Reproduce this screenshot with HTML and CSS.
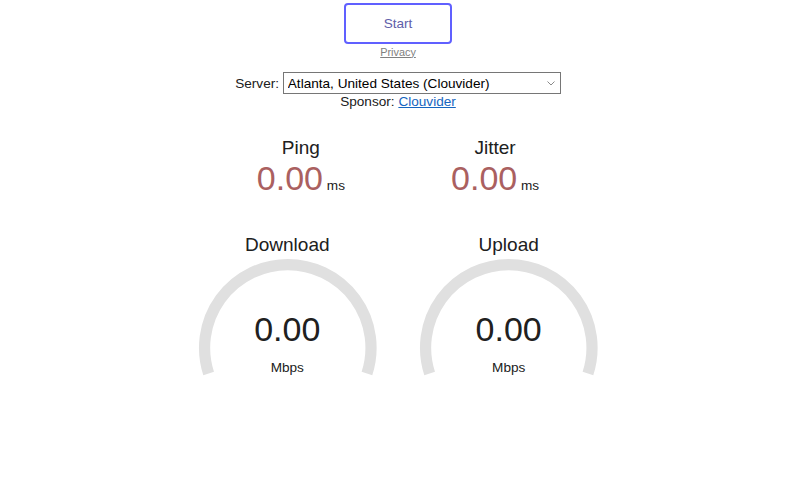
FILE: index.html
```html
<!DOCTYPE html>
<html lang="en">
<head>
<meta charset="utf-8">
<title>LibreSpeed</title>
<link rel="stylesheet" href="styles.css">
</head>
<body>
<div class="wrapper">
  <button class="start-btn" type="button">Start</button><br>
  <a class="privacy" href="#">Privacy</a>
  <div class="server-area">
    Server: <span class="select-wrap"><select class="server-select">
      <option>Atlanta, United States (Clouvider)</option>
    </select><svg class="select-arrow" viewBox="0 0 8 5" width="8" height="5"><path d="M0.5 0.5 L4 4 L7.5 0.5" fill="none" stroke="#8a8a8a" stroke-width="1"/></svg></span>
  </div>
  <div class="sponsor-area">Sponsor: <a class="sponsor-link" href="#">Clouvider</a></div>
  <div class="test">
    <div class="test-group">
      <div class="test-area-small">
        <div class="test-name">Ping</div>
        <div class="meter-text meter-text-ping">0.00</div>
        <div class="unit">ms</div>
      </div>
      <div class="test-area-small">
        <div class="test-name">Jitter</div>
        <div class="meter-text meter-text-ping">0.00</div>
        <div class="unit">ms</div>
      </div>
    </div>
    <div class="test-group">
      <div class="test-area">
        <svg class="meter" viewBox="0 0 217.6 170" width="217.6" height="170">
          <path d="M 29.65 141.49 A 83.22 83.22 0 1 1 187.95 141.49" fill="none" stroke="#E0E0E0" stroke-width="11.22"/>
        </svg>
        <div class="test-name gauge-name">Download</div>
        <div class="meter-text gauge-text">0.00</div>
        <div class="unit gauge-unit">Mbps</div>
      </div>
      <div class="test-area">
        <svg class="meter" viewBox="0 0 217.6 170" width="217.6" height="170">
          <path d="M 29.65 141.49 A 83.22 83.22 0 1 1 187.95 141.49" fill="none" stroke="#E0E0E0" stroke-width="11.22"/>
        </svg>
        <div class="test-name gauge-name">Upload</div>
        <div class="meter-text gauge-text">0.00</div>
        <div class="unit gauge-unit">Mbps</div>
      </div>
    </div>
  </div>
</div>
</body>
</html>
```

FILE: styles.css
```css
html, body {
  margin: 0;
  padding: 0;
  background: #FFFFFF;
  color: #202020;
}

body {
  font-family: "Liberation Sans", Arial, sans-serif;
  font-size: 13.6px;
  text-align: center;
  padding: 3px 4px 0 0;
}

.start-btn {
  display: inline-block;
  box-sizing: border-box;
  width: 8em;
  height: 3em;
  line-height: 2.7em;
  padding: 0;
  margin: 0;
  font: inherit;
  font-size: 13.6px;
  color: #6060AA;
  background: transparent;
  border: 0.15em solid #6060FF;
  border-radius: 0.3em;
  cursor: pointer;
}

.privacy {
  font-size: 0.8em;
  color: #808080;
  padding: 0 3em;
}

.server-area {
  margin-top: 1em;
}

.select-wrap {
  display: inline-grid;
  vertical-align: baseline;
}

.select-wrap > * {
  grid-area: 1 / 1;
}

.server-select {
  appearance: none;
  -webkit-appearance: none;
  box-sizing: border-box;
  width: 278px;
  height: 22px;
  font-family: inherit;
  font-size: 13.6px;
  color: #000000;
  background: #FFFFFF;
  border: 1px solid #767676;
  border-radius: 0;
  padding: 0 20px 0 4px;
  margin: 0;
}

.select-arrow {
  justify-self: end;
  align-self: center;
  margin-right: 6px;
  pointer-events: none;
}

.sponsor-link {
  color: #1565C0;
}

.test {
  margin-top: 2em;
}

.test-group {
  display: flex;
  justify-content: center;
  gap: 0.28em;
}

.test-area-small {
  width: 14em;
  height: 7em;
  box-sizing: border-box;
}

.test-name {
  font-size: 1.4em;
}

.meter-text {
  display: inline-block;
  font-size: 2.5em;
}

.meter-text-ping {
  color: #AA6060;
}

.unit {
  display: inline-block;
}

.test-area {
  display: grid;
  width: 16em;
  height: 12.5em;
  box-sizing: border-box;
}

.test-area > * {
  grid-area: 1 / 1;
}

.meter {
  width: 100%;
  height: 100%;
  display: block;
}

.gauge-name {
  align-self: start;
  margin-top: 0.1em;
}

.gauge-text {
  display: block;
  align-self: end;
  margin-bottom: 1.55em;
}

.gauge-unit {
  display: block;
  align-self: end;
  margin-bottom: 2em;
}
```
